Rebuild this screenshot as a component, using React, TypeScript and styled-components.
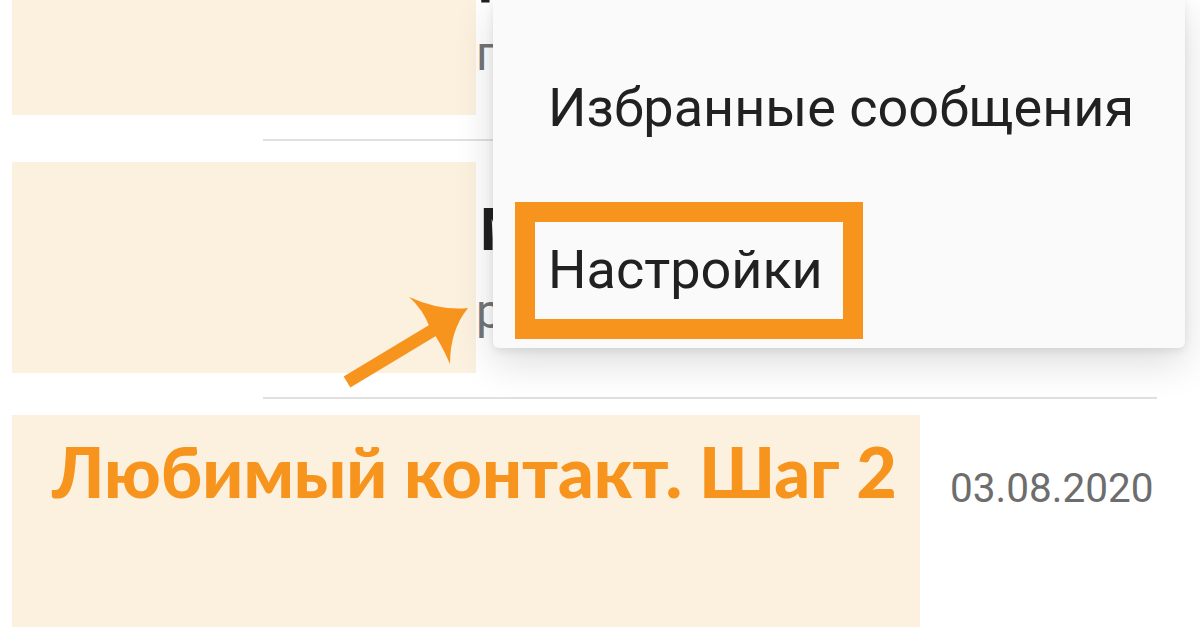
import React from "react";
import styled, { createGlobalStyle } from "styled-components";

const Global = createGlobalStyle`
  html, body { margin: 0; padding: 0; background: #ffffff; }
  body { font-family: Roboto, "Noto Sans", Arial, sans-serif; }
`;

const Page = styled.div`
  position: relative;
  width: 1200px;
  height: 630px;
  overflow: hidden;
  background: #ffffff;
`;

const List = styled.div`
  display: flex;
  flex-direction: column;
  margin-top: -117px;
`;

const Row = styled.div`
  display: flex;
  align-items: flex-start;
  height: 256px;
`;

const Mask = styled.div<{ $wide?: boolean }>`
  flex: none;
  box-sizing: border-box;
  margin-left: 12px;
  margin-top: ${(p) => (p.$wide ? "16px" : "21px")};
  width: ${(p) => (p.$wide ? "908px" : "464px")};
  height: ${(p) => (p.$wide ? "212px" : "211px")};
  background: #fcf0de;
  padding: ${(p) => (p.$wide ? "21px 0 0 40px" : "0")};
`;

const TextCol = styled.div`
  flex: 1;
  min-width: 0;
  padding-top: 54px;
  overflow: hidden;
  white-space: nowrap;
`;

const Name = styled.div`
  font-family: Roboto, sans-serif;
  font-weight: 700;
  font-size: 60px;
  line-height: 70px;
  color: #212121;
  margin-left: 4px;
`;

const Preview = styled.div`
  font-family: Roboto, sans-serif;
  font-size: 48px;
  line-height: 56px;
  color: #757575;
  margin-top: 19px;
`;

const DateText = styled.div`
  flex: none;
  margin-top: 64px;
  margin-left: 30px;
  font-family: Roboto, sans-serif;
  font-size: 40.5px;
  line-height: 50px;
  color: #6d6d6d;
`;

const Divider = styled.div`
  height: 2px;
  margin: 0 43px 0 263px;
  background: #e0e0e0;
`;

const Title = styled.div`
  font-family: Lato, "Open Sans", sans-serif;
  font-weight: 900;
  font-size: 70px;
  line-height: 70px;
  color: #f7941d;
  white-space: nowrap;
`;

const Menu = styled.div`
  position: absolute;
  left: 493px;
  top: 0;
  width: 692px;
  height: 348px;
  box-sizing: border-box;
  padding-top: 26px;
  overflow: hidden;
  background: #fafafa;
  border-radius: 0 0 6px 6px;
  box-shadow: 0 14px 40px rgba(0, 0, 0, 0.14), 0 3px 8px rgba(0, 0, 0, 0.08);
`;

const MenuItem = styled.div`
  position: relative;
  height: 162px;
  display: flex;
  align-items: center;
  padding-left: 55px;
  font-family: Roboto, sans-serif;
  font-size: 54px;
  color: #212121;
  white-space: nowrap;
`;

const Highlight = styled.div`
  position: absolute;
  left: 22px;
  top: 14px;
  width: 348px;
  height: 137px;
  box-sizing: border-box;
  border: 20px solid #f7941d;
`;

const ArrowSvg = styled.svg`
  position: absolute;
  left: 0;
  top: 0;
  pointer-events: none;
`;

const rows = [
  { name: "Дмитрий", preview: "где ты? перезвони" },
  { name: "Мама", preview: "ребята, привет" },
];

export default function App() {
  return (
    <Page>
      <Global />
      <List>
        {rows.map((r) => (
          <React.Fragment key={r.name}>
            <Row>
              <Mask />
              <TextCol>
                <Name>{r.name}</Name>
                <Preview>{r.preview}</Preview>
              </TextCol>
            </Row>
            <Divider />
          </React.Fragment>
        ))}
        <Row>
          <Mask $wide>
            <Title>Любимый контакт. Шаг 2</Title>
          </Mask>
          <DateText>03.08.2020</DateText>
        </Row>
      </List>

      <ArrowSvg width="1200" height="630" viewBox="0 0 1200 630">
        <line x1="347" y1="382" x2="440" y2="326" stroke="#f7941d" strokeWidth="13" />
        <path
          d="M409 297 Q440 311 468 308 Q450 330 450 364 Q441 343 430 328 Q423 309 409 297 Z"
          fill="#f7941d"
        />
      </ArrowSvg>

      <Menu>
        <MenuItem>Избранные сообщения</MenuItem>
        <MenuItem>
          <Highlight />
          Настройки
        </MenuItem>
      </Menu>
    </Page>
  );
}
